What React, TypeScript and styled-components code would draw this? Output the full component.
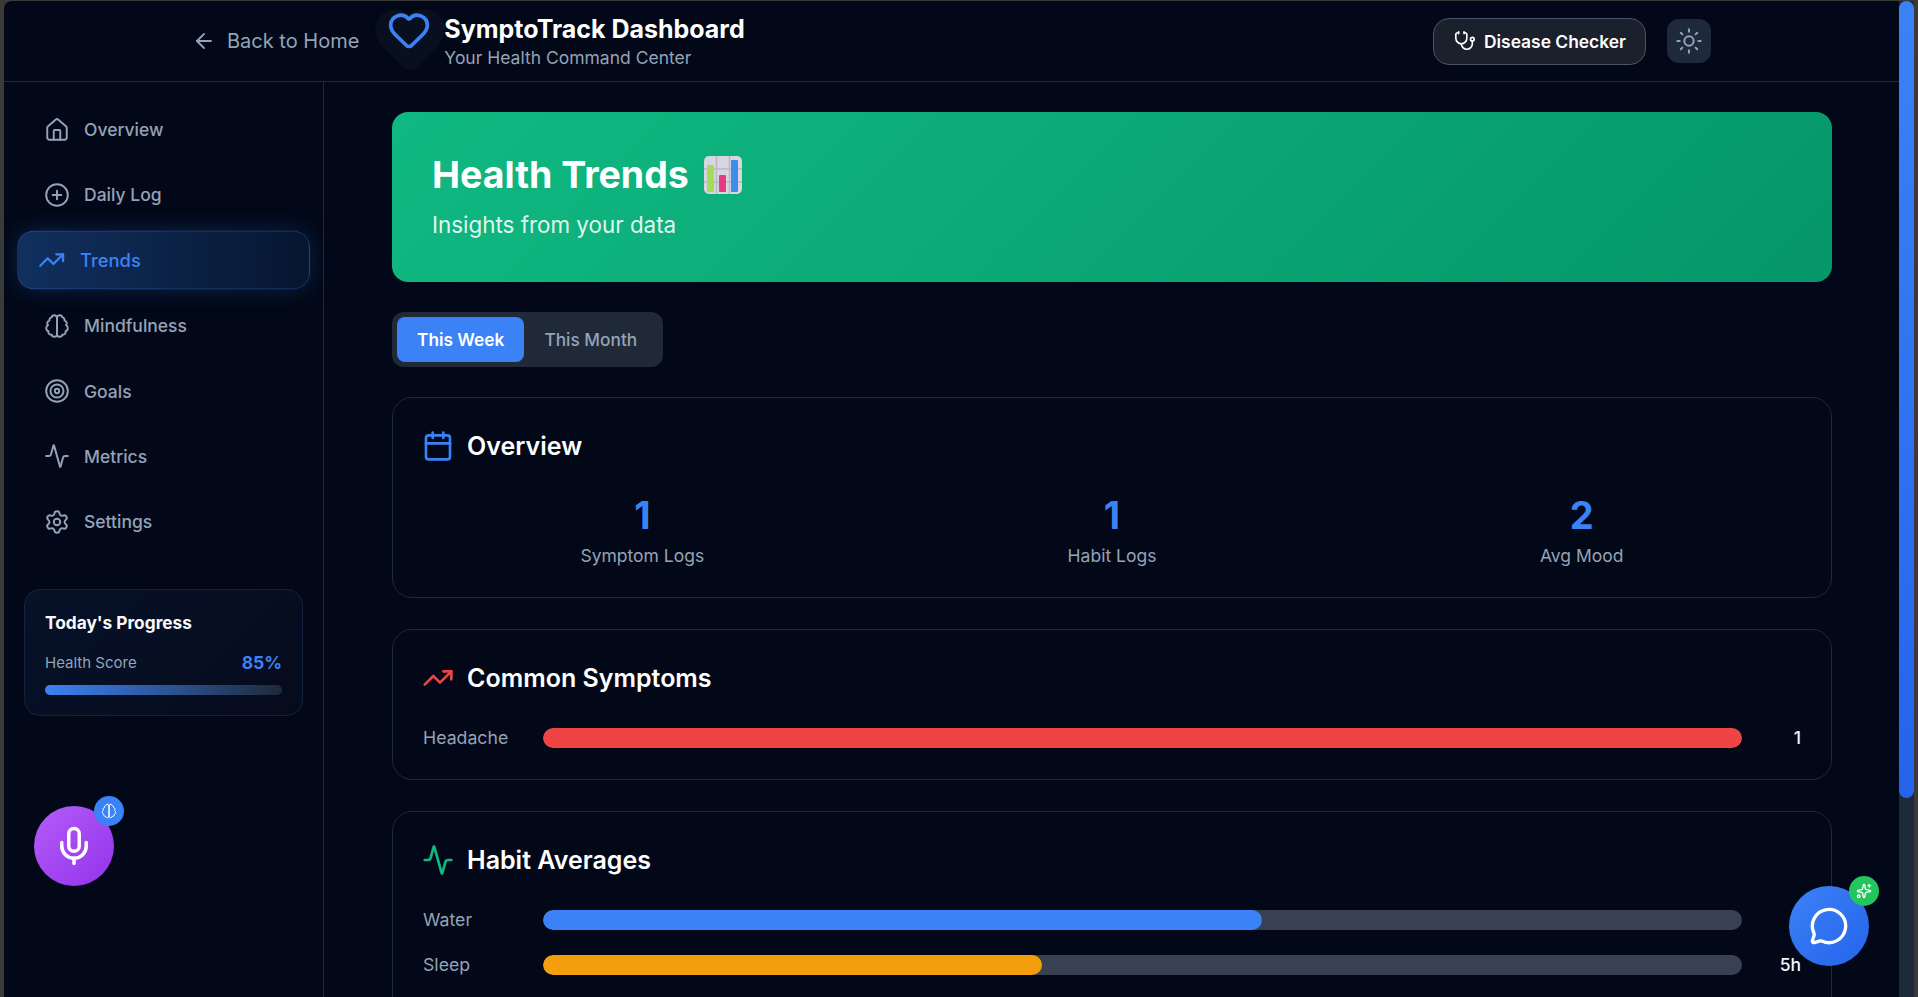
import styled, { createGlobalStyle } from 'styled-components'
import {
  ArrowLeft,
  Activity,
  Calendar,
  CirclePlus,
  Heart,
  House,
  MessageCircle,
  Mic,
  Settings,
  Sparkles,
  Stethoscope,
  Sun,
  Target,
  TrendingUp
} from 'lucide-react'

const GlobalStyle = createGlobalStyle`
  html, body {
    margin: 0;
    height: 100%;
    overflow: hidden;
    background: #3a3a3a;
  }
  * { box-sizing: border-box; }
  body {
    font-family: Inter, "Liberation Sans", sans-serif;
    color: #fff;
  }
`

// lucide's older two-lobed brain, the current package draws it differently
const BrainIcon = ({ size = 24, stroke = 2 }: { size?: number; stroke?: number }) => (
  <svg width={size} height={size} viewBox="0 0 24 24" fill="none" stroke="currentColor" strokeWidth={stroke} strokeLinecap="round" strokeLinejoin="round">
    <path d="M9.5 2A2.5 2.5 0 0 1 12 4.5v15a2.5 2.5 0 0 1-4.96.44 2.5 2.5 0 0 1-2.96-3.08 3 3 0 0 1-.34-5.58 2.5 2.5 0 0 1 1.32-4.24 2.5 2.5 0 0 1 1.98-3A2.5 2.5 0 0 1 9.5 2Z" />
    <path d="M14.5 2A2.5 2.5 0 0 0 12 4.5v15a2.5 2.5 0 0 0 4.96.44 2.5 2.5 0 0 0 2.96-3.08 3 3 0 0 0 .34-5.58 2.5 2.5 0 0 0-1.32-4.24 2.5 2.5 0 0 0-1.98-3A2.5 2.5 0 0 0 14.5 2Z" />
  </svg>
)

const ChartEmoji = () => (
  <svg width="40" height="40" viewBox="0 0 40 40">
    <rect x="1" y="1" width="38" height="38" rx="5" fill="#d9d6e3" />
    <path d="M1 14h38M1 27h38M13.5 1v38M26.5 1v38" stroke="#b9b6c6" strokeWidth="1.5" />
    <rect x="4" y="10" width="7" height="27" rx="1" fill="#a4dc5c" />
    <rect x="16" y="20" width="7" height="17" rx="1" fill="#e83a80" />
    <rect x="28" y="5" width="7" height="32" rx="1" fill="#3b8fe8" />
  </svg>
)

const navItems = [
  { label: 'Overview', icon: <House size={26} strokeWidth={1.8} /> },
  { label: 'Daily Log', icon: <CirclePlus size={26} strokeWidth={1.8} /> },
  { label: 'Trends', icon: <TrendingUp size={26} strokeWidth={2} />, active: true },
  { label: 'Mindfulness', icon: <BrainIcon size={26} stroke={1.8} /> },
  { label: 'Goals', icon: <Target size={26} strokeWidth={1.8} /> },
  { label: 'Metrics', icon: <Activity size={26} strokeWidth={1.8} /> },
  { label: 'Settings', icon: <Settings size={26} strokeWidth={1.8} /> }
]

const stats = [
  { value: 1, label: 'Symptom Logs' },
  { value: 1, label: 'Habit Logs' },
  { value: 2, label: 'Avg Mood' }
]

const habits = [
  { label: 'Water', percent: 60, color: '#3b82f6', value: '6' },
  { label: 'Sleep', percent: 41.6, color: '#f59e0b', value: '5h' }
]

const App = () => {
  return (
    <Frame>
      <GlobalStyle />
      <Viewport>
        <Header>
          <HeaderLeft>
            <BackLink>
              <ArrowLeft size={24} strokeWidth={1.8} />
              Back to Home
            </BackLink>
            <Logo>
              <HeartGlow>
                <Heart size={76} strokeWidth={2} fill="#081020" />
              </HeartGlow>
              <HeartMark>
                <Heart size={44} strokeWidth={2} />
              </HeartMark>
            </Logo>
            <div>
              <BrandTitle>SymptoTrack Dashboard</BrandTitle>
              <BrandSub>Your Health Command Center</BrandSub>
            </div>
          </HeaderLeft>
          <HeaderRight>
            <CheckerButton>
              <Stethoscope size={22} strokeWidth={1.8} />
              Disease Checker
            </CheckerButton>
            <ThemeButton>
              <Sun size={28} strokeWidth={1.7} />
            </ThemeButton>
          </HeaderRight>
        </Header>
        <Body>
          <Sidebar>
            <Nav>
              {navItems.map((item) => (
                <NavItem key={item.label} $active={item.active}>
                  {item.icon}
                  {item.label}
                </NavItem>
              ))}
            </Nav>
            <ProgressCard>
              <ProgressTitle>Today's Progress</ProgressTitle>
              <ProgressRow>
                <ProgressLabel>Health Score</ProgressLabel>
                <ProgressValue>85%</ProgressValue>
              </ProgressRow>
              <ProgressTrack />
            </ProgressCard>
          </Sidebar>
          <Main>
            <Hero>
              <HeroTitle>
                Health Trends <ChartEmoji />
              </HeroTitle>
              <HeroSub>Insights from your data</HeroSub>
            </Hero>
            <Tabs>
              <Tab $active>This Week</Tab>
              <Tab>This Month</Tab>
            </Tabs>
            <Card>
              <CardHeading $color="#3b82f6">
                <Calendar size={32} strokeWidth={2} />
                Overview
              </CardHeading>
              <StatGrid>
                {stats.map((stat) => (
                  <Stat key={stat.label}>
                    <StatValue>{stat.value}</StatValue>
                    <StatLabel>{stat.label}</StatLabel>
                  </Stat>
                ))}
              </StatGrid>
            </Card>
            <Card>
              <CardHeading $color="#ef4444">
                <TrendingUp size={32} strokeWidth={2} />
                Common Symptoms
              </CardHeading>
              <BarList>
                <BarRow>
                  <BarLabel>Headache</BarLabel>
                  <BarTrack>
                    <BarFill $color="#ef4444" style={{ width: '100%' }} />
                  </BarTrack>
                  <BarValue>1</BarValue>
                </BarRow>
              </BarList>
            </Card>
            <Card $open>
              <CardHeading $color="#10b981">
                <Activity size={32} strokeWidth={2} />
                Habit Averages
              </CardHeading>
              <BarList>
                {habits.map((habit) => (
                  <BarRow key={habit.label}>
                    <BarLabel>{habit.label}</BarLabel>
                    <BarTrack>
                      <BarFill $color={habit.color} style={{ width: `${habit.percent}%` }} />
                    </BarTrack>
                    <BarValue>{habit.value}</BarValue>
                  </BarRow>
                ))}
              </BarList>
            </Card>
          </Main>
        </Body>
      </Viewport>
      <ScrollRail>
        <ScrollThumb />
      </ScrollRail>
      <MicButton>
        <Mic size={42} strokeWidth={2} />
        <MicBadge>
          <BrainIcon size={16} stroke={1.5} />
        </MicBadge>
      </MicButton>
      <ChatButton>
        <MessageCircle size={40} strokeWidth={2} />
        <ChatBadge>
          <Sparkles size={16} strokeWidth={2} />
        </ChatBadge>
      </ChatButton>
    </Frame>
  )
}

export default App

const Frame = styled.div`
  position: relative;
  display: flex;
  height: 100vh;
  padding: 1px 4px 0;
  background: #3a3a3a;
`

const Viewport = styled.div`
  flex: 1;
  min-width: 0;
  display: flex;
  flex-direction: column;
  overflow: hidden;
  background: #020817;
  border-top-left-radius: 8px;
`

const ScrollRail = styled.div`
  flex: none;
  width: 15px;
  background: #1e293b;
`

const ScrollThumb = styled.div`
  height: 797px;
  border-radius: 8px;
  background: linear-gradient(180deg, #3b82f6, #2563eb);
`

const Header = styled.header`
  flex: none;
  height: 81px;
  display: flex;
  align-items: center;
  justify-content: space-between;
  padding: 0 188px 0 188px;
  border-bottom: 1px solid #1e293b;
`

const HeaderLeft = styled.div`
  display: flex;
  align-items: center;
`

const BackLink = styled.a`
  display: flex;
  align-items: center;
  gap: 11px;
  margin-right: 28px;
  font-size: 20px;
  color: #94a3b8;
`

const Logo = styled.div`
  position: relative;
  align-self: flex-start;
  width: 44px;
  height: 44px;
  margin: -5px 13px 0 0;
  flex: none;
`

const HeartMark = styled.div`
  position: absolute;
  inset: 0;
  color: #3b82f6;
`

const HeartGlow = styled.div`
  position: absolute;
  left: -15px;
  top: -8px;
  color: #081020;
`

const BrandTitle = styled.div`
  font-size: 25px;
  font-weight: 700;
  line-height: 32px;
  color: #fff;
`

const BrandSub = styled.div`
  margin-top: 1px;
  font-size: 17.5px;
  line-height: 24px;
  color: #94a3b8;
`

const HeaderRight = styled.div`
  display: flex;
  align-items: center;
  gap: 21px;
`

const CheckerButton = styled.button`
  display: flex;
  align-items: center;
  gap: 8px;
  height: 47px;
  width: 213px;
  padding: 0 20px;
  border-radius: 16px;
  border: 1px solid #475569;
  background: #1a202c;
  color: #fff;
  font: 600 17.4px Inter, sans-serif;
  white-space: nowrap;

  svg {
    flex: none;
  }
`

const ThemeButton = styled.button`
  display: flex;
  align-items: center;
  justify-content: center;
  width: 44px;
  height: 44px;
  padding: 0;
  border: none;
  border-radius: 12px;
  background: #1e293b;
  color: #94a3b8;
`

const Body = styled.div`
  flex: 1;
  display: flex;
  min-height: 0;
`

const Sidebar = styled.aside`
  flex: none;
  width: 320px;
  padding: 19.5px 20px 0;
  border-right: 1px solid #1e293b;
`

const Nav = styled.nav`
  display: flex;
  flex-direction: column;
  gap: 9.4px;
  margin-bottom: 39.5px;
`

const NavItem = styled.a<{ $active?: boolean }>`
  display: flex;
  align-items: center;
  gap: 14px;
  height: 56px;
  padding-left: 19px;
  border-radius: 16px;
  font-size: 17.5px;
  font-weight: 500;
  color: ${(p) => (p.$active ? '#3b82f6' : '#94a3b8')};
  border: 1px solid ${(p) => (p.$active ? 'rgba(59, 130, 246, 0.25)' : 'transparent')};
  background: ${(p) => (p.$active ? 'linear-gradient(90deg, #11305f, #061630)' : 'transparent')};
  box-shadow: ${(p) => (p.$active ? '0 0 22px rgba(59, 130, 246, 0.22)' : 'none')};
  transform: ${(p) => (p.$active ? 'scale(1.05)' : 'none')};

  svg {
    flex: none;
  }
`

const ProgressCard = styled.div`
  height: 127px;
  padding: 21px 20px 20px;
  border-radius: 16px;
  border: 1px solid #13233f;
  background: linear-gradient(135deg, #061229, #060b1c);
`

const ProgressTitle = styled.div`
  font-size: 17.3px;
  font-weight: 700;
  line-height: 24px;
  margin-bottom: 16px;
  color: #f8fafc;
`

const ProgressRow = styled.div`
  display: flex;
  align-items: center;
  justify-content: space-between;
  height: 22px;
  margin-bottom: 12px;
`

const ProgressLabel = styled.span`
  font-size: 15px;
  color: #94a3b8;
`

const ProgressValue = styled.span`
  font-size: 17.5px;
  font-weight: 700;
  color: #3b82f6;
`

const ProgressTrack = styled.div`
  height: 10px;
  border-radius: 999px;
  background: linear-gradient(90deg, #3b82f6, #1e293b);
`

const Main = styled.main`
  flex: 1;
  min-width: 0;
  padding: 30px 67px 0 68px;
  display: flex;
  flex-direction: column;
  align-items: stretch;
`

const Hero = styled.section`
  flex: none;
  height: 170px;
  padding: 40px;
  border-radius: 16px;
  background: linear-gradient(135deg, #10b981, #059669);
  margin-bottom: 30px;
`

const HeroTitle = styled.h1`
  display: flex;
  align-items: center;
  gap: 14px;
  margin: 0 0 12px;
  font-size: 37.5px;
  line-height: 46px;
  font-weight: 700;
  color: #fff;
`

const HeroSub = styled.p`
  margin: 0;
  font-size: 22.4px;
  line-height: 30px;
  color: rgba(255, 255, 255, 0.9);
`

const Tabs = styled.div`
  flex: none;
  align-self: flex-start;
  display: flex;
  width: 271px;
  height: 55px;
  padding: 5px;
  border-radius: 12px;
  background: #1f2937;
  margin-bottom: 30px;
`

const Tab = styled.button<{ $active?: boolean }>`
  height: 45px;
  padding: 0 20px;
  border: none;
  border-radius: 8px;
  font: ${(p) => (p.$active ? 600 : 500)} 17.3px Inter, sans-serif;
  white-space: nowrap;
  background: ${(p) => (p.$active ? '#3b82f6' : 'transparent')};
  color: ${(p) => (p.$active ? '#fff' : '#94a3b8')};
`

const Card = styled.section<{ $open?: boolean }>`
  flex: none;
  padding: 32px 30px ${(p) => (p.$open ? '120px' : '31px')};
  border-radius: 20px;
  border: 1px solid #1e293b;
  margin-bottom: 31px;
`

const CardHeading = styled.h2<{ $color: string }>`
  display: flex;
  align-items: center;
  gap: 13px;
  margin: 0 0 30px;
  font-size: 25px;
  line-height: 32px;
  font-weight: 600;
  color: #fff;

  svg {
    margin-left: -1px;
    color: ${(p) => p.$color};
  }
`

const StatGrid = styled.div`
  display: grid;
  grid-template-columns: repeat(3, 1fr);
  gap: 31px;
`

const Stat = styled.div`
  text-align: center;
`

const StatValue = styled.div`
  font-size: 38px;
  line-height: 46px;
  font-weight: 700;
  color: #3b82f6;
`

const StatLabel = styled.div`
  margin-top: 6px;
  font-size: 17.5px;
  line-height: 23px;
  margin-bottom: -1px;
  color: #94a3b8;
`

const BarList = styled.div`
  display: flex;
  flex-direction: column;
  gap: 25px;
  margin-top: 34px;
`

const BarRow = styled.div`
  display: flex;
  align-items: center;
  height: 20px;
`

const BarLabel = styled.span`
  flex: none;
  width: 120px;
  font-size: 17.7px;
  line-height: 20px;
  color: #94a3b8;
`

const BarTrack = styled.div`
  flex: 1;
  height: 20px;
  border-radius: 999px;
  background: #374151;
  overflow: hidden;
`

const BarFill = styled.div<{ $color: string }>`
  height: 100%;
  border-radius: 999px;
  background: ${(p) => p.$color};
`

const BarValue = styled.span`
  flex: none;
  width: 59px;
  text-align: right;
  font-size: 17.5px;
  line-height: 20px;
  font-weight: 500;
  color: #f1f5f9;
`

const FloatingButton = styled.button`
  position: absolute;
  display: flex;
  align-items: center;
  justify-content: center;
  width: 80px;
  height: 80px;
  padding: 0;
  border: none;
  border-radius: 50%;
  color: #fff;
`

const MicButton = styled(FloatingButton)`
  left: 34px;
  top: 806px;
  background: linear-gradient(135deg, #b45cf9, #9333ea);
`

const ChatButton = styled(FloatingButton)`
  left: 1789px;
  top: 886px;
  background: linear-gradient(135deg, #3b82f6, #2563eb);
`

const Badge = styled.span`
  position: absolute;
  display: flex;
  align-items: center;
  justify-content: center;
  width: 30px;
  height: 30px;
  top: -10px;
  right: -10px;
  border-radius: 50%;
  color: #fff;
`

const MicBadge = styled(Badge)`
  background: #3b82f6;
`

const ChatBadge = styled(Badge)`
  background: #22c55e;
`
